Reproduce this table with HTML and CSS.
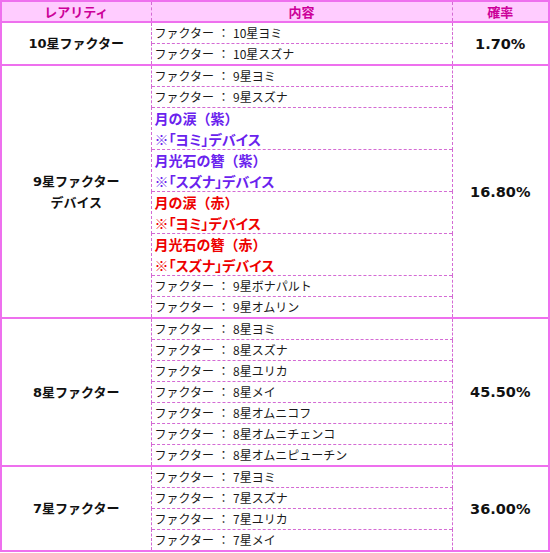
FILE: index.html
```html
<!DOCTYPE html>
<html lang="ja">
<head>
<meta charset="utf-8">
<title>排出確率</title>
<link rel="stylesheet" href="styles.css">
</head>
<body>
<table class="rates">
  <colgroup><col class="c1"><col class="c2"><col class="c3"></colgroup>
  <thead>
    <tr><th>レアリティ</th><th>内容</th><th>確率</th></tr>
  </thead>
  <tbody>
    <tr><td class="rar" rowspan="2">10星ファクター</td><td class="item">ファクター<span class="sep">：</span>10星ヨミ</td><td class="rate" rowspan="2">1.70%</td></tr>
    <tr><td class="item">ファクター<span class="sep">：</span>10星スズナ</td></tr>
  </tbody>
  <tbody>
    <tr><td class="rar" rowspan="8">9星ファクター<br>デバイス</td><td class="item">ファクター<span class="sep">：</span>9星ヨミ</td><td class="rate" rowspan="8">16.80%</td></tr>
    <tr><td class="item">ファクター<span class="sep">：</span>9星スズナ</td></tr>
    <tr><td class="item two purple">月の涙（紫）<br><span class="note">※「ヨミ」デバイス</span></td></tr>
    <tr><td class="item two purple">月光石の簪（紫）<br><span class="note">※「スズナ」デバイス</span></td></tr>
    <tr><td class="item two red">月の涙（赤）<br><span class="note">※「ヨミ」デバイス</span></td></tr>
    <tr><td class="item two red">月光石の簪（赤）<br><span class="note">※「スズナ」デバイス</span></td></tr>
    <tr><td class="item">ファクター<span class="sep">：</span>9星ボナパルト</td></tr>
    <tr><td class="item">ファクター<span class="sep">：</span>9星オムリン</td></tr>
  </tbody>
  <tbody>
    <tr><td class="rar" rowspan="7">8星ファクター</td><td class="item">ファクター<span class="sep">：</span>8星ヨミ</td><td class="rate" rowspan="7">45.50%</td></tr>
    <tr><td class="item">ファクター<span class="sep">：</span>8星スズナ</td></tr>
    <tr><td class="item">ファクター<span class="sep">：</span>8星ユリカ</td></tr>
    <tr><td class="item">ファクター<span class="sep">：</span>8星メイ</td></tr>
    <tr><td class="item">ファクター<span class="sep">：</span>8星オムニコフ</td></tr>
    <tr><td class="item">ファクター<span class="sep">：</span>8星オムニチェンコ</td></tr>
    <tr><td class="item">ファクター<span class="sep">：</span>8星オムニピューチン</td></tr>
  </tbody>
  <tbody>
    <tr><td class="rar" rowspan="4">7星ファクター</td><td class="item">ファクター<span class="sep">：</span>7星ヨミ</td><td class="rate" rowspan="4">36.00%</td></tr>
    <tr><td class="item">ファクター<span class="sep">：</span>7星スズナ</td></tr>
    <tr><td class="item">ファクター<span class="sep">：</span>7星ユリカ</td></tr>
    <tr><td class="item">ファクター<span class="sep">：</span>7星メイ</td></tr>
  </tbody>
</table>
</body>
</html>
```

FILE: styles.css
```css
html, body {
  margin: 0;
  padding: 0;
  background: #ffffff;
}

.rates {
  width: 550px;
  table-layout: fixed;
  border-collapse: collapse;
  border: 2px solid #ee70ee;
  font-family: "DejaVu Sans", "Noto Sans CJK JP", sans-serif;
  color: #111111;
}

.rates .c1 { width: 150px; }
.rates .c3 { width: 97px; }

.rates th,
.rates td {
  border: 1px dashed #d46ad4;
  padding: 0;
}

.rates thead th {
  background: #ffccff;
  color: #cc0099;
  font-family: "Noto Sans CJK JP", sans-serif;
  font-size: 13px;
  font-weight: 700;
  height: 19px;
  line-height: 19px;
  text-align: center;
  border-bottom: 2px solid #ee70ee;
}

.rates tbody {
  border-top: 2px solid #ee70ee;
  border-bottom: 2px solid #ee70ee;
}

.rates .item {
  font-family: "Noto Sans CJK JP", sans-serif;
  font-size: 12px;
  line-height: 20px;
  height: 20px;
  padding: 0 3px;
  white-space: nowrap;
  color: #1a1a1a;
}

.rates .sep {
  display: inline-block;
  width: 19px;
  text-align: center;
  font-feature-settings: "palt";
}

.rates .item.two {
  line-height: 20.5px;
  height: 41px;
  font-weight: 700;
  font-size: 14px;
}

.rates .item.two .note {
  font-feature-settings: "palt";
}

.rates .purple { color: #6a22ee; }
.rates .red { color: #ee0000; }

.rates .rar {
  text-align: center;
  font-weight: 700;
  font-size: 13px;
  line-height: 21px;
}

.rates .rate {
  text-align: center;
  font-weight: 700;
  font-size: 14.5px;
}
```
